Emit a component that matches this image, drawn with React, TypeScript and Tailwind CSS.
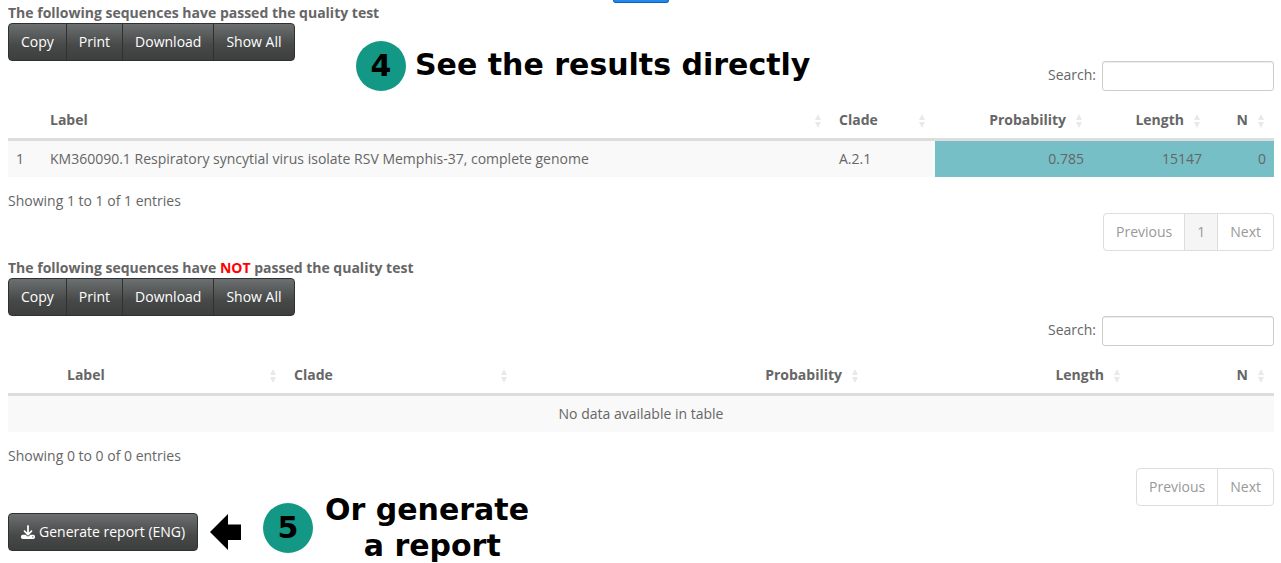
import { ReactNode } from "react";
import { FaDownload } from "react-icons/fa6";

const darkButton =
  "border border-[#2f3030] bg-linear-to-b from-[#6d7070] via-[#474949] via-60% to-[#3d3f3f] px-3 py-2 text-white";

function ButtonGroup() {
  return (
    <div className="flex">
      {["Copy", "Print", "Download", "Show All"].map((name) => (
        <button
          key={name}
          type="button"
          className={`${darkButton} -ml-px first:ml-0 first:rounded-l last:rounded-r`}
        >
          {name}
        </button>
      ))}
    </div>
  );
}

function SortIcon() {
  return (
    <svg className="absolute top-3 right-[10px] h-4 w-[6px]" viewBox="0 0 6 16" fill="#e9e9e9" aria-hidden="true">
      <path d="M0 7 L3 1 L6 7 Z M0 9 L3 15 L6 9 Z" />
    </svg>
  );
}

type Column = { name: string; width: string; numeric?: boolean };

type PanelProps = {
  id: string;
  title: ReactNode;
  indexWidth: string;
  columns: Column[];
  rows: string[][];
  info: string;
  pages: string[];
};

function ResultPanel({ id, title, indexWidth, columns, rows, info, pages }: PanelProps) {
  return (
    <section className="pb-[7px]">
      <h2 className="font-bold">{title}</h2>
      <ButtonGroup />
      <div className="flex items-start justify-end gap-[6px]">
        <label htmlFor={id} className="pt-1">
          Search:
        </label>
        <input
          id={id}
          type="search"
          className="h-[30px] w-[172px] rounded-[3px] border border-[#cccccc] bg-white px-2 shadow-[inset_0_1px_1px_rgba(0,0,0,0.075)]"
        />
      </div>
      <table className="mt-[10px] w-full table-fixed border-collapse">
        <colgroup>
          <col className={indexWidth} />
          {columns.map((c) => (
            <col key={c.name} className={c.width} />
          ))}
        </colgroup>
        <thead>
          <tr>
            <td className="border-b-3 border-[#dddddd]" />
            {columns.map((c) => (
              <th
                key={c.name}
                scope="col"
                className={`relative border-b-3 border-[#dddddd] pt-[9px] pr-[26px] pb-2 pl-2 font-bold ${c.numeric ? "text-right" : "text-left"}`}
              >
                {c.name}
                <SortIcon />
              </th>
            ))}
          </tr>
        </thead>
        <tbody>
          {rows.length === 0 ? (
            <tr className="bg-[#f9f9f9]">
              <td colSpan={columns.length + 1} className="p-2 text-center">
                No data available in table
              </td>
            </tr>
          ) : (
            rows.map((row) => (
              <tr key={row[0]} className="bg-[#f9f9f9]">
                {row.map((cell, i) => (
                  <td
                    key={i}
                    className={`p-2 ${i > 0 && columns[i - 1].numeric ? "bg-[#76bfc6] text-right" : ""}`}
                  >
                    {cell}
                  </td>
                ))}
              </tr>
            ))
          )}
        </tbody>
      </table>
      <p className="mt-[14px]">{info}</p>
      <nav className="mt-[2px] flex justify-end text-[#999999]" aria-label="Pagination">
        {["Previous", ...pages, "Next"].map((name) => (
          <button
            key={name}
            type="button"
            className={`-ml-px border border-[#dddddd] px-3 py-2 first:rounded-l last:rounded-r ${pages.includes(name) ? "bg-[#f5f5f5]" : "bg-white"}`}
          >
            {name}
          </button>
        ))}
      </nav>
    </section>
  );
}

function StepBadge({ children }: { children: ReactNode }) {
  return (
    <span className="flex size-[50px] shrink-0 items-center justify-center rounded-full bg-[#149886]">
      {children}
    </span>
  );
}

export default function App() {
  return (
    <main className="relative min-h-screen overflow-hidden bg-white pr-[7px] pb-3 pl-2 font-['Open_Sans',sans-serif] text-[14px] leading-5 text-[#666666]">
      <div className="flex justify-center">
        <button
          type="button"
          aria-label="Run"
          className="h-[3px] w-14 rounded-b border border-t-0 border-[#0c62b4] bg-[#2288f0]"
        />
      </div>

      <ResultPanel
        id="search-passed"
        title="The following sequences have passed the quality test"
        indexWidth="w-[34px]"
        columns={[
          { name: "Label", width: "w-auto" },
          { name: "Clade", width: "w-[104px]" },
          { name: "Probability", width: "w-[157px]", numeric: true },
          { name: "Length", width: "w-[118px]", numeric: true },
          { name: "N", width: "w-16", numeric: true },
        ]}
        rows={[
          [
            "1",
            "KM360090.1 Respiratory syncytial virus isolate RSV Memphis-37, complete genome",
            "A.2.1",
            "0.785",
            "15147",
            "0",
          ],
        ]}
        info="Showing 1 to 1 of 1 entries"
        pages={["1"]}
      />

      <ResultPanel
        id="search-failed"
        title={
          <>
            The following sequences have <span className="text-[#ff0000]">NOT</span> passed the quality test
          </>
        }
        indexWidth="w-[51px]"
        columns={[
          { name: "Label", width: "w-[227px]" },
          { name: "Clade", width: "w-[231px]" },
          { name: "Probability", width: "w-auto", numeric: true },
          { name: "Length", width: "w-[262px]", numeric: true },
          { name: "N", width: "w-36", numeric: true },
        ]}
        rows={[]}
        info="Showing 0 to 0 of 0 entries"
        pages={[]}
      />

      <button type="button" className={`${darkButton} flex items-center gap-1 rounded`}>
        <FaDownload className="size-[14px]" />
        Generate report (ENG)
      </button>

      <div className="absolute top-[41px] left-[356px] flex gap-[9px] font-['DejaVu_Sans',sans-serif] text-[30px] leading-9 font-bold whitespace-nowrap text-black">
        <StepBadge>4</StepBadge>
        <p className="pt-[6px]">See the results directly</p>
      </div>

      <div className="absolute top-[492px] left-[210px] flex font-['DejaVu_Sans',sans-serif] text-[30px] leading-9 font-bold whitespace-nowrap text-black">
        <svg className="mt-[22px] h-9 w-[31px]" viewBox="0 0 31 36" fill="#000000" aria-hidden="true">
          <path d="M0 18 L18 0 V10.5 H31 V26 H18 V36 Z" />
        </svg>
        <div className="mt-[11px] mr-3 ml-[22px]">
          <StepBadge>5</StepBadge>
        </div>
        <p className="text-center">
          Or generate
          <br />
          &nbsp;a report
        </p>
      </div>
    </main>
  );
}
